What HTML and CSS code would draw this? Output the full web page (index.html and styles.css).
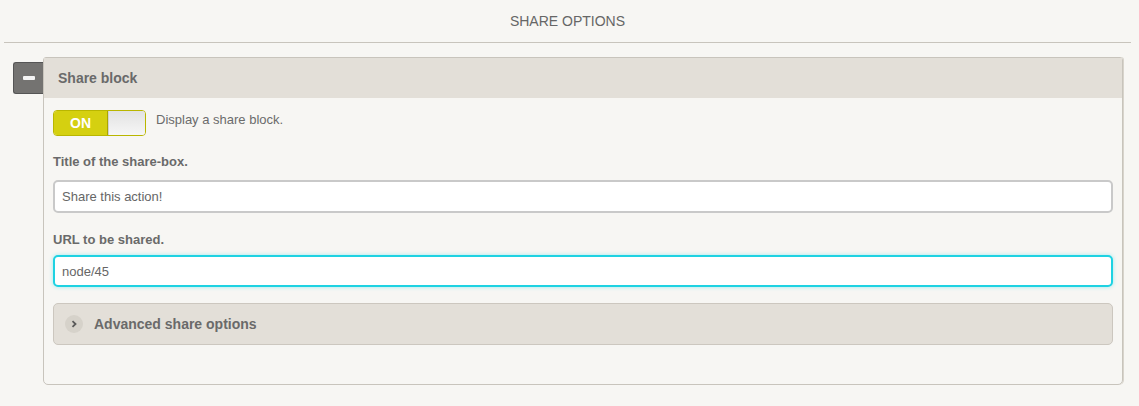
FILE: index.html
```html
<!DOCTYPE html>
<html lang="en">
<head>
  <meta charset="UTF-8" />
  <title>Share options</title>
  <link rel="stylesheet" href="styles.css">
</head>
<body>
  <h3 class="section-title">SHARE OPTIONS</h3>

  <div class="block-row">
    <button class="collapse-btn" title="Collapse"><span class="bar"></span></button>
    <div class="fieldset">
      <div class="fieldset-legend">Share block</div>
      <div class="fieldset-body">
        <div class="toggle-row">
          <div class="toggle">
            <span class="toggle-on">ON</span>
            <span class="toggle-handle"></span>
          </div>
          <span class="toggle-desc">Display a share block.</span>
        </div>

        <label class="field-label" for="shareTitle">Title of the share-box.</label>
        <input class="text-input" type="text" id="shareTitle" value="Share this action!" />

        <label class="field-label second" for="shareUrl">URL to be shared.</label>
        <input class="text-input focused" type="text" id="shareUrl" value="node/45" />

        <div class="advanced">
          <span class="chevron">
            <svg width="8" height="8" viewBox="0 0 8 8"><path d="M2.5 1.2 L5.5 4 L2.5 6.8" fill="none" stroke="#5a5a5a" stroke-width="1.8"/></svg>
          </span>
          <span class="advanced-label">Advanced share options</span>
        </div>
      </div>
    </div>
  </div>
</body>
</html>
```

FILE: styles.css
```css
body {
  margin: 0;
  padding: 0 8px 0 4px;
  background-color: #f7f6f3;
  font-family: "Liberation Sans", Arial, sans-serif;
  color: #666;
}
.section-title {
  margin: 0;
  padding: 13px 0 13px;
  text-align: center;
  font-size: 14px;
  font-weight: normal;
  color: #666;
  border-bottom: 1px solid #c8c4bc;
  line-height: 16px;
}
.block-row {
  display: flex;
  align-items: flex-start;
  margin: 14px 8px 0 9px;
}
.collapse-btn {
  margin-top: 5px;
  width: 30px;
  height: 32px;
  padding: 0;
  background-color: #747371;
  border: 1px solid #555;
  border-right: none;
  border-radius: 3px 0 0 3px;
  display: flex;
  align-items: center;
  justify-content: center;
}
.collapse-btn .bar {
  display: block;
  width: 12px;
  height: 4px;
  background: #f4f4f4;
  border-radius: 1px;
}
.fieldset {
  flex: 1;
  border: 1px solid #c8c4bc;
  border-radius: 3px 3px 5px 5px;
  box-shadow: 1px 0 0 #d8d4cc;
}
.fieldset-legend {
  background-color: #e3dfd8;
  padding: 11px 14px;
  height: 18px;
  line-height: 18px;
  font-size: 14px;
  font-weight: bold;
  color: #6a6a6a;
}
.fieldset-body {
  padding: 12px 9px 39px;
}
.toggle-row {
  display: flex;
  align-items: flex-start;
  gap: 10px;
}
.toggle {
  display: flex;
  width: 91px;
  height: 24px;
  border: 1px solid #b9b600;
  border-radius: 4px;
  overflow: hidden;
}
.toggle-on {
  width: 53px;
  background-color: #d5d010;
  color: #fff;
  font-weight: bold;
  font-size: 14px;
  line-height: 24px;
  text-align: center;
  border-right: 1px solid #aaa600;
}
.toggle-handle {
  flex: 1;
  background: linear-gradient(#e2e2e2, #f6f6f6);
  border-left: 1px solid #d0d0d0;
}
.toggle-desc {
  font-size: 13px;
  line-height: 20px;
  color: #6b6b6b;
}
.field-label {
  display: block;
  margin: 18px 0 10px;
  font-size: 13px;
  font-weight: bold;
  color: #6a6a6a;
  line-height: 16px;
}
.field-label.second {
  margin: 19px 0 7px;
}
.text-input {
  display: block;
  box-sizing: border-box;
  width: 100%;
  height: 33px;
  padding: 0 7px;
  font-family: "Liberation Sans", Arial, sans-serif;
  font-size: 13px;
  color: #666;
  background: #fff;
  border: 2px solid #c9c9c9;
  border-radius: 5px;
  outline: none;
}
.text-input.focused {
  height: 32px;
  border-color: #1ed2e2;
  box-shadow: 0 0 4px #9fe9ef;
}
.advanced {
  display: flex;
  align-items: center;
  margin-top: 16px;
  height: 40px;
  padding: 0 11px;
  background-color: #e3dfd8;
  border: 1px solid #ccc7bf;
  border-radius: 5px;
}
.chevron {
  display: flex;
  align-items: center;
  justify-content: center;
  width: 18px;
  height: 18px;
  border-radius: 50%;
  background-color: #d6d2ca;
  margin-right: 11px;
}
.advanced-label {
  font-size: 14px;
  font-weight: bold;
  color: #6a6a6a;
}
```
